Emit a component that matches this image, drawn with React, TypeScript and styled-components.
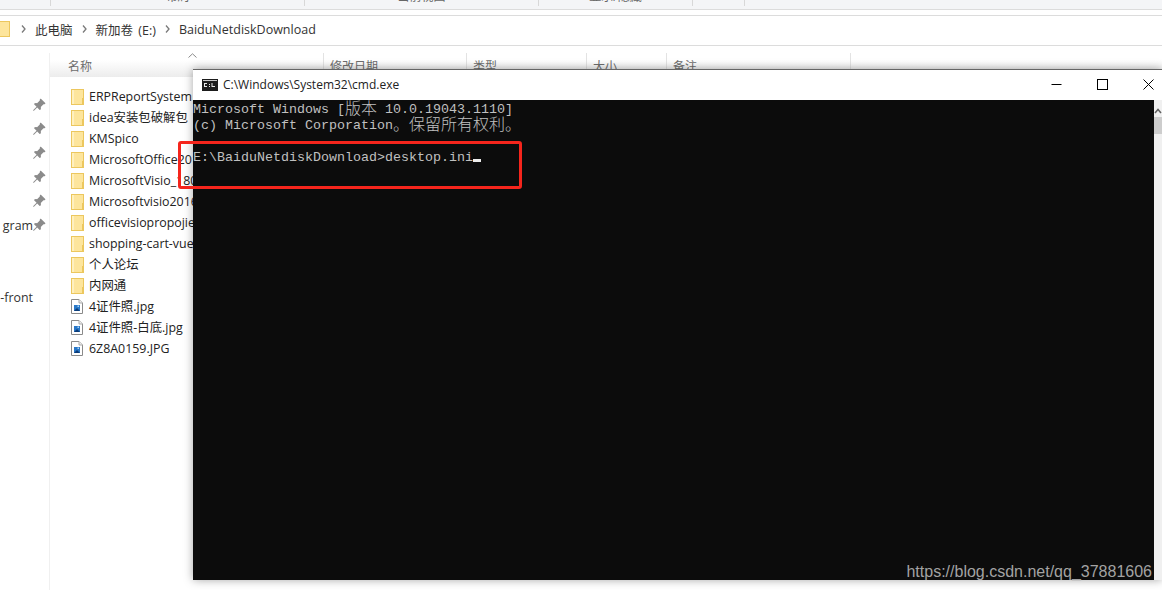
import styled, { createGlobalStyle } from 'styled-components'
import { BsPinAngleFill } from 'react-icons/bs'

const GlobalStyle = createGlobalStyle`
	html, body {
		margin: 0;
		padding: 0;
		background: #fff;
		overflow: hidden;
	}
`
const Page = styled.div`
	position: relative;
	width: 1162px;
	height: 590px;
	overflow: hidden;
	background: #fff;
	color: #1e1e1e;
	font-family: "Open Sans", "Noto Sans CJK SC", sans-serif;
	font-size: 12px;
`
const Ribbon = styled.div`
	display: flex;
	height: 9px;
	overflow: hidden;
	background: #f4f5f7;
	border-bottom: 1px solid #dcdcdc;
`
const RibbonGroup = styled.div<{ $width: number }>`
	box-sizing: border-box;
	width: ${(p) => p.$width}px;
	height: 6px;
	border-right: 1px solid #d8d8d8;
	text-align: center;
	color: #666;
	line-height: 12px;
	flex-shrink: 0;
`
const RibbonLabel = styled.div`
	margin-top: -9px;
`
const AddressBar = styled.div`
	display: flex;
	align-items: center;
	box-sizing: border-box;
	height: 31px;
	margin-top: 5px;
	padding-bottom: 3px;
	border-top: 1px solid #dcdcdc;
	border-bottom: 1px solid #dcdcdc;
	font-size: 12.5px;
	color: #333;
	overflow: hidden;
`
const Crumb = styled.span`
	white-space: nowrap;
	word-spacing: 2px;
`
const Chevron = styled.svg`
	margin: 0 9px;
	flex-shrink: 0;
`
const RootFolder = styled.svg`
	margin-right: 2px;
	flex-shrink: 0;
`
const Main = styled.div`
	display: flex;
	height: 544px;
`
const Nav = styled.div`
	width: 49px;
	margin-top: 7px;
	padding-top: 40px;
	border-right: 1px solid #f0f0f0;
	overflow: hidden;
`
const NavRow = styled.div`
	display: flex;
	justify-content: flex-end;
	align-items: center;
	height: 24px;
	padding-right: 4px;
	white-space: nowrap;
	color: #333;
	font-size: 12.4px;
`
const PinSlot = styled.div`
	display: flex;
	justify-content: center;
	width: 12px;
	flex-shrink: 0;
`
const PinIcon = styled(BsPinAngleFill)`
	color: #8b8b8b;
	font-size: 14px;
	flex-shrink: 0;
`
const ListPane = styled.div`
	flex: 1;
	min-width: 0;
`
const HeaderRow = styled.div`
	position: relative;
	display: grid;
	grid-template-columns: 274px 143px 120px 80px 184px;
	height: 24px;
	margin-top: 7px;
	background: linear-gradient(#fff, #fff 30%, #ececec);
	color: #6d6d6d;
`
const HeaderCell = styled.div<{ $first?: boolean }>`
	padding: 4px 0 0 ${(p) => (p.$first ? 18 : 6)}px;
	border-right: 1px solid #e3e3e3;
	white-space: nowrap;
	overflow: hidden;
`
const SortCaret = styled.svg`
	position: absolute;
	left: 138px;
	top: 0;
`
const Rows = styled.div`
	margin-top: 9px;
	padding-left: 21px;
`
const Row = styled.div`
	display: flex;
	align-items: center;
	gap: 5px;
	height: 21px;
	color: #222;
	font-size: 12.4px;
	line-height: 16px;
	white-space: nowrap;
`
const Window = styled.div`
	position: absolute;
	left: 193px;
	top: 69px;
	width: 969px;
	height: 511px;
	display: flex;
	flex-direction: column;
	background: #fff;
	border-top: 1px solid #666;
	box-sizing: border-box;
	box-shadow: 0 0 9px rgba(0, 0, 0, 0.35);
`
const TitleBar = styled.div`
	display: flex;
	align-items: center;
	height: 30px;
	margin-right: -9px;
	padding-left: 9px;
	flex-shrink: 0;
`
const TitleText = styled.span`
	flex: 1;
	margin-left: 5px;
	padding-bottom: 1px;
	color: #222;
	font-size: 12px;
	white-space: nowrap;
`
const WindowButton = styled.div`
	display: flex;
	align-items: center;
	justify-content: center;
	width: 46px;
	height: 28px;
	padding-bottom: 2px;
`
const ConsoleWrap = styled.div`
	display: flex;
	flex: 1;
	min-height: 0;
`
const Console = styled.div`
	flex: 1;
	padding-top: 2px;
	background: #0c0c0c;
	color: #c0c0c0;
	font-family: "Liberation Mono", "Noto Sans CJK SC", monospace;
	font-size: 13.33px;
`
const ConsoleLine = styled.div`
	height: 16px;
	line-height: 16px;
	white-space: pre;
`
const Wide = styled.span`
	display: inline-block;
	font-family: "Noto Sans CJK SC", sans-serif;
	font-weight: 300;
	font-size: 16px;
	line-height: 11px;
	vertical-align: top;
`
const Cursor = styled.span`
	display: inline-block;
	width: 8px;
	height: 3px;
	background: #ededed;
	vertical-align: -1px;
`
const Scrollbar = styled.div`
	width: 8px;
	background: #f0f0f0;
	padding-top: 17px;
	flex-shrink: 0;
`
const ScrollThumb = styled.div`
	width: 8px;
	height: 17px;
	background: #cdcdcd;
`
const ScrollArrow = styled.svg`
	position: absolute;
	right: 0;
	top: 38px;
`
const RedBox = styled.div`
	position: absolute;
	left: 178px;
	top: 141px;
	width: 338px;
	height: 42px;
	border: 3px solid #f5251c;
	border-radius: 3px;
`
const Watermark = styled.div`
	position: absolute;
	right: 10px;
	bottom: 9px;
	color: #a3a3a3;
	font-family: "Liberation Sans", sans-serif;
	font-size: 16px;
	white-space: nowrap;
`

function ChevronIcon() {
	return (
		<Chevron width="5" height="8" viewBox="0 0 5 8">
			<path d="M1 0.5 L4 4 L1 7.5" fill="none" stroke="#7a7a7a" strokeWidth="1.3" />
		</Chevron>
	)
}

function FolderIcon() {
	return (
		<svg width="13" height="16" viewBox="0 0 13 16" style={{ flexShrink: 0 }}>
			<rect x="0.5" y="0.5" width="12" height="15" fill="#fde59c" stroke="#ecc75e" />
			<rect x="1" y="1" width="2" height="14" fill="#fff0bf" />
			<rect x="11" y="9" width="1.5" height="6.5" fill="#ecc75e" />
		</svg>
	)
}

function ImageIcon() {
	return (
		<svg width="13" height="15" viewBox="0 0 13 15" style={{ flexShrink: 0 }}>
			<path d="M0.5 0.5 H8 L11.5 4 V14.5 H0.5 Z" fill="#fff" stroke="#8a8a8a" />
			<path d="M8 0.5 V4 H11.5" fill="#eee" stroke="#aaa" />
			<rect x="3" y="6" width="6" height="6" fill="#2a78c8" />
			<path d="M3 12 L6 9 L9 12 Z" fill="#0d3c78" />
			<rect x="6.5" y="6.5" width="1.5" height="1.5" fill="#a8d4f5" />
		</svg>
	)
}

function CmdIcon() {
	return (
		<svg width="16" height="12" viewBox="0 0 16 12">
			<rect x="0" y="0" width="16" height="12" fill="#1c1c1c" />
			<rect x="1" y="1" width="14" height="1" fill="#c8c8c8" />
			<path d="M2 4 H5 V5 H3 V7 H5 V8 H2 Z M7 5 H8 V6 H7 Z M7 7 H8 V8 H7 Z M9.5 4 H10.5 V7 H13 V8 H9.5 Z" fill="#e8e8e8" />
		</svg>
	)
}

const navRows = [
	{ pin: true },
	{ pin: true },
	{ pin: true },
	{ pin: true },
	{ pin: true },
	{ text: 'gram', pin: true },
	{},
	{},
	{ text: '-front' },
]

const files = [
	{ name: 'ERPReportSystem', kind: 'folder' },
	{ name: 'idea安装包破解包', kind: 'folder' },
	{ name: 'KMSpico', kind: 'folder' },
	{ name: 'MicrosoftOffice2016', kind: 'folder' },
	{ name: 'MicrosoftVisio_1806', kind: 'folder' },
	{ name: 'Microsoftvisio2016', kind: 'folder' },
	{ name: 'officevisiopropojie', kind: 'folder' },
	{ name: 'shopping-cart-vue', kind: 'folder' },
	{ name: '个人论坛', kind: 'folder' },
	{ name: '内网通', kind: 'folder' },
	{ name: '4证件照.jpg', kind: 'image' },
	{ name: '4证件照-白底.jpg', kind: 'image' },
	{ name: '6Z8A0159.JPG', kind: 'image' },
]

function App() {
	return (
		<Page>
			<GlobalStyle />
			<Ribbon>
				<RibbonGroup $width={51} />
				<RibbonGroup $width={254}><RibbonLabel>布局</RibbonLabel></RibbonGroup>
				<RibbonGroup $width={234}><RibbonLabel>当前视图</RibbonLabel></RibbonGroup>
				<RibbonGroup $width={154}><RibbonLabel>显示/隐藏</RibbonLabel></RibbonGroup>
				<RibbonGroup $width={52} />
			</Ribbon>
			<AddressBar>
				<RootFolder width="10" height="16" viewBox="0 0 10 16">
					<rect x="-4" y="0.5" width="13.5" height="15" fill="#fde59c" stroke="#ecc75e" />
				</RootFolder>
				<ChevronIcon />
				<Crumb>此电脑</Crumb>
				<ChevronIcon />
				<Crumb>新加卷 (E:)</Crumb>
				<ChevronIcon />
				<Crumb>BaiduNetdiskDownload</Crumb>
			</AddressBar>
			<Main>
				<Nav>
					{navRows.map((row, i) => (
						<NavRow key={i}>
							{row.text}
							<PinSlot>{row.pin && <PinIcon />}</PinSlot>
						</NavRow>
					))}
				</Nav>
				<ListPane>
					<HeaderRow>
						<HeaderCell $first>名称</HeaderCell>
						<HeaderCell>修改日期</HeaderCell>
						<HeaderCell>类型</HeaderCell>
						<HeaderCell>大小</HeaderCell>
						<HeaderCell>备注</HeaderCell>
						<SortCaret width="9" height="5" viewBox="0 0 9 5">
							<path d="M0.5 4.5 L4.5 0.8 L8.5 4.5" fill="none" stroke="#8a8a8a" />
						</SortCaret>
					</HeaderRow>
					<Rows>
						{files.map((file) => (
							<Row key={file.name}>
								{file.kind === 'folder' ? <FolderIcon /> : <ImageIcon />}
								{file.name}
							</Row>
						))}
					</Rows>
				</ListPane>
			</Main>
			<Window>
				<TitleBar>
					<CmdIcon />
					<TitleText>C:\Windows\System32\cmd.exe</TitleText>
					<WindowButton>
						<svg width="11" height="11" viewBox="0 0 11 11"><path d="M0.5 5.5 H10.5" stroke="#000" /></svg>
					</WindowButton>
					<WindowButton>
						<svg width="11" height="11" viewBox="0 0 11 11"><rect x="0.5" y="0.5" width="10" height="10" fill="none" stroke="#000" /></svg>
					</WindowButton>
					<WindowButton>
						<svg width="11" height="11" viewBox="0 0 11 11"><path d="M0.5 0.5 L10.5 10.5 M10.5 0.5 L0.5 10.5" stroke="#000" /></svg>
					</WindowButton>
				</TitleBar>
				<ConsoleWrap>
					<Console>
						<ConsoleLine>Microsoft Windows [<Wide>版本</Wide> 10.0.19043.1110]</ConsoleLine>
						<ConsoleLine>(c) Microsoft Corporation<Wide>。保留所有权利。</Wide></ConsoleLine>
						<ConsoleLine> </ConsoleLine>
						<ConsoleLine>E:\BaiduNetdiskDownload&gt;desktop.ini<Cursor /></ConsoleLine>
					</Console>
					<Scrollbar><ScrollThumb /></Scrollbar>
					<ScrollArrow width="8" height="6" viewBox="0 0 8 6">
						<path d="M1 5 L4 1.5 L7 5" fill="none" stroke="#606060" strokeWidth="1.5" />
					</ScrollArrow>
				</ConsoleWrap>
			</Window>
			<RedBox />
			<Watermark>https://blog.csdn.net/qq_37881606</Watermark>
		</Page>
	)
}

export default App
